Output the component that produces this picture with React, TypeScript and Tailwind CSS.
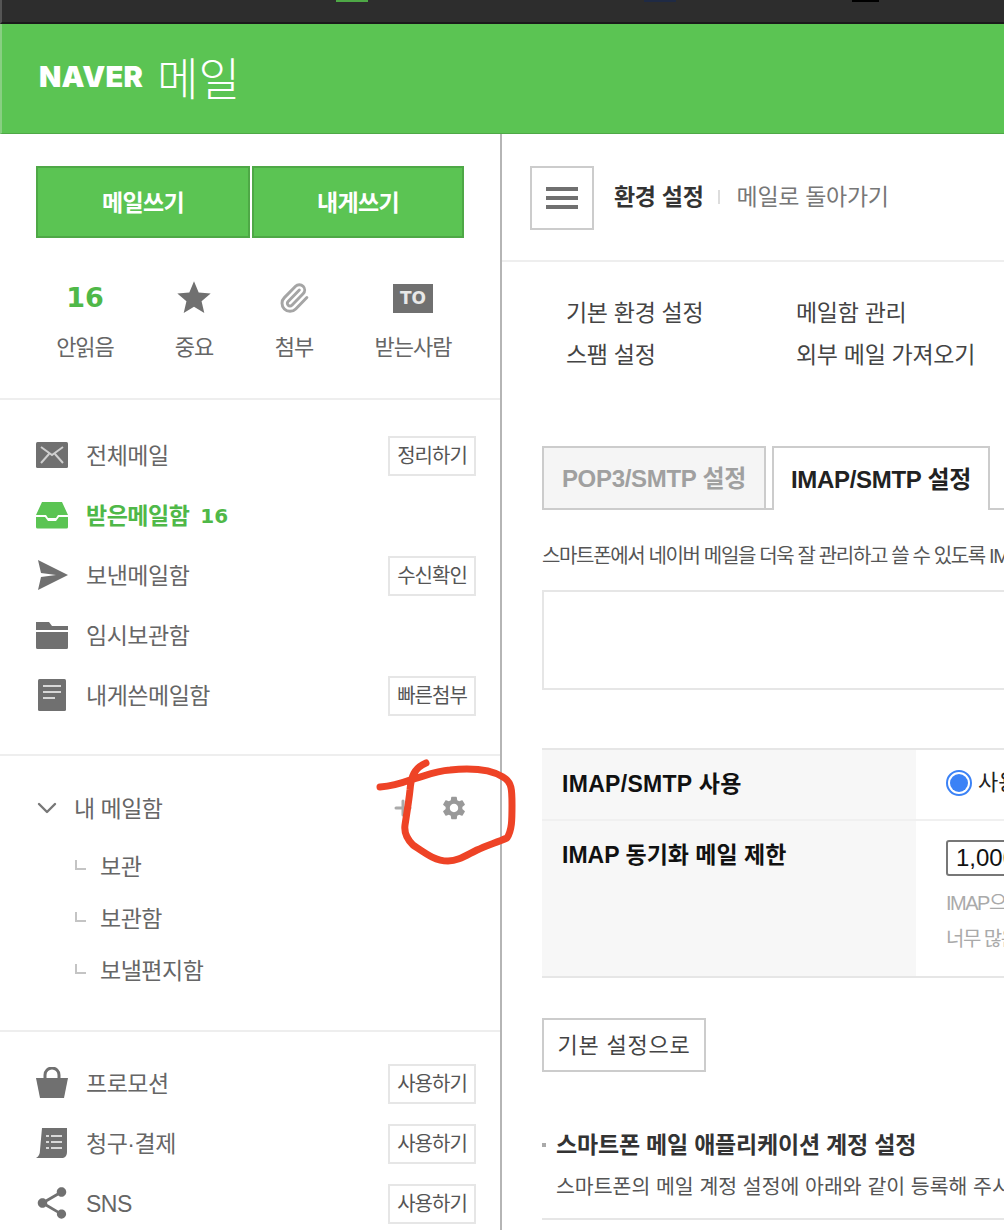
import React from "react";
import { ChevronDown, Paperclip, Plus } from "lucide-react";
import { MdSettings, MdShare, MdStar } from "react-icons/md";

// 사이드바 아이콘
const MailIcon = () => (
  <svg width="32" height="28" viewBox="0 0 32 28" fill="none">
    <rect x="0" y="1" width="32" height="26" rx="1.5" fill="#707070" />
    <path d="M5 6l11 8 11-8M5 22l8-9M27 22l-8-9" stroke="#cfcfcf" strokeWidth="2" />
  </svg>
);

const InboxIcon = () => (
  <svg width="32" height="28" viewBox="0 0 32 28">
    <path d="M6 1h20l6 13H22l-2 3h-8l-2-3H0z" fill="#5bc453" />
    <path d="M0 16h9l3 4h8l3-4h9v10a1.5 1.5 0 0 1-1.500 1.500H1.500A1.500 1.500 0 0 1 0 26z" fill="#5bc453" />
  </svg>
);

const SendIcon = () => (
  <svg width="32" height="32" viewBox="0 0 32 32">
    <path d="M2 1l30 15L2 31l3-13 15-2-15-2z" fill="#707070" />
  </svg>
);

const FolderIcon = () => (
  <svg width="32" height="28" viewBox="0 0 32 28">
    <path d="M0 1h13l3 4h16v4H0z" fill="#707070" />
    <path d="M0 11h32v15.500a1.500 1.500 0 0 1-1.500 1.500H1.500A1.500 1.500 0 0 1 0 26.500z" fill="#707070" />
  </svg>
);

const DocIcon = () => (
  <svg width="32" height="32" viewBox="0 0 32 32">
    <rect x="2" y="0" width="28" height="32" rx="1.500" fill="#707070" />
    <path d="M7 7h18M7 13h18M7 19h12" stroke="#d8d8d8" strokeWidth="2.200" />
  </svg>
);

const BagIcon = () => (
  <svg width="32" height="32" viewBox="0 0 32 32">
    <path d="M0 11h32l-4 20H4z" fill="#707070" />
    <path d="M9 12V8a7 7 0 0 1 14 0v4" fill="none" stroke="#707070" strokeWidth="3" />
  </svg>
);

const BillIcon = () => (
  <svg width="32" height="32" viewBox="0 0 32 32">
    <path d="M6 1h25v24q0 5-4 6H0q4-2 4-8z" fill="#707070" />
    <path d="M10 9h3M15 9h11M10 15h3M15 15h11M10 21h3M15 21h11" stroke="#d8d8d8" strokeWidth="2.200" />
  </svg>
);

const GhostButton = ({ label }: { label: string }) => (
  <span className="flex h-10 w-[88px] items-center justify-center border-2 border-[#e6e6e6] text-[20px] tracking-[-1px] text-[#555]">
    {label}
  </span>
);

const navItems = [
  { icon: <MailIcon />, label: "전체메일", action: "정리하기" },
  { icon: <InboxIcon />, label: "받은메일함", count: "16" },
  { icon: <SendIcon />, label: "보낸메일함", action: "수신확인" },
  { icon: <FolderIcon />, label: "임시보관함" },
  { icon: <DocIcon />, label: "내게쓴메일함", action: "빠른첨부" },
];

const extraItems = [
  { icon: <BagIcon />, label: "프로모션" },
  { icon: <BillIcon />, label: "청구·결제" },
  { icon: <MdShare className="h-[38px] w-[38px] -ml-[3px] text-[#707070]" />, label: "SNS" },
];

const NavRow = ({ icon, label, action, count }: { icon: React.ReactNode; label: string; action?: string; count?: string }) => (
  <div className="flex h-[60px] items-center pr-6">
    <span className="flex w-[50px] shrink-0 items-center">{icon}</span>
    <span className={count ? "mt-0.5 text-[23px] font-bold tracking-[-0.5px] text-[#4fb848]" : "mt-0.5 text-[23px] tracking-[-0.5px] text-[#666]"}>
      {label}
    </span>
    {count && <span className="ml-[11px] mt-0.5 font-['DejaVu_Sans',sans-serif] text-[20px] font-bold text-[#4fb848]">{count}</span>}
    {action && <span className="ml-auto mt-0.5"><GhostButton label={action} /></span>}
  </div>
);

const stats = [
  { top: <span className="font-['DejaVu_Sans',sans-serif] text-[27px] font-bold text-[#4fb848]">16</span>, label: "안읽음", w: "w-[108px]" },
  { top: <MdStar className="h-[40px] w-[40px] text-[#707070]" />, label: "중요", w: "w-[110px]" },
  { top: <Paperclip className="h-[32px] w-[32px] text-[#a5a5a5]" strokeWidth={2.200} />, label: "첨부", w: "w-[90px]" },
  {
    top: (
      <span className="flex h-[29px] w-10 items-center justify-center bg-[#707070] font-['DejaVu_Sans',sans-serif] text-[17px] font-bold leading-none text-[#e8e8e8]">
        TO
      </span>
    ),
    label: "받는사람",
    w: "w-[148px]",
  },
];

const Sidebar = () => (
  <aside className="w-[502px] shrink-0 border-r-2 border-[#b5b5b5]">
    {/* 메일쓰기 버튼, 요약 */}
    <div className="h-[266px] border-b-2 border-[#eeeeee] pt-8">
      <div className="ml-9 flex gap-0.5">
        <button className="h-[72px] w-[214px] border-2 border-[#4ea846] bg-[#5bc453] pt-0.5 text-[23px] font-bold tracking-[-0.6px] text-white">메일쓰기</button>
        <button className="h-[72px] w-[212px] border-2 border-[#4ea846] bg-[#5bc453] pt-0.5 text-[23px] font-bold tracking-[-0.6px] text-white">내게쓰기</button>
      </div>
      <div className="ml-[31px] mt-[38px] flex">
        {stats.map((s) => (
          <div key={s.label} className={`flex flex-col items-center ${s.w}`}>
            <span className="flex h-[44px] items-center">{s.top}</span>
            <span className="mt-[11px] text-[22px] tracking-[-1px] text-[#666]">{s.label}</span>
          </div>
        ))}
      </div>
    </div>

    {/* 메일함 */}
    <div className="h-[356px] border-b-2 border-[#eeeeee] pl-9 pt-[25px]">
      {navItems.map((item) => (
        <NavRow key={item.label} {...item} />
      ))}
    </div>

    {/* 내 메일함 */}
    <div className="h-[276px] border-b-2 border-[#eeeeee] pt-[22px]">
      <div className="flex h-[60px] items-center pl-[31px]">
        <ChevronDown className="h-8 w-8 text-[#777]" strokeWidth={1.800} />
        <span className="ml-[11px] mt-0.5 text-[23px] tracking-[-0.5px] text-[#666]">내 메일함</span>
        <Plus className="ml-[228px] h-[24px] w-[24px] text-[#aaa]" strokeWidth={3} />
        <MdSettings className="ml-[25px] h-[28px] w-[28px] text-[#999]" />
      </div>
      <div className="mt-[3px]">
        {["보관", "보관함", "보낼편지함"].map((name) => (
          <div key={name} className="flex h-[52px] items-center pl-[75px]">
            <span className="mb-1 h-[10px] w-[11px] border-b-2 border-l-2 border-[#c4c4c4]" />
            <span className="ml-[14px] text-[23px] tracking-[-0.5px] text-[#666]">{name}</span>
          </div>
        ))}
      </div>
    </div>

    {/* 부가 서비스 */}
    <div className="pl-9 pt-[21px]">
      {extraItems.map((item) => (
        <NavRow key={item.label} icon={item.icon} label={item.label} action="사용하기" />
      ))}
    </div>
  </aside>
);

const Content = () => (
  <main className="min-w-0 flex-1 overflow-hidden whitespace-nowrap">
    {/* 상단 */}
    <div className="flex h-[128px] items-start border-b-2 border-[#eeeeee] pl-7 pt-8">
      <button className="flex h-16 w-16 flex-col items-center justify-center gap-[5px] border-2 border-[#cccccc]">
        <span className="h-1 w-8 bg-[#707070]" />
        <span className="h-1 w-8 bg-[#707070]" />
        <span className="h-1 w-8 bg-[#707070]" />
      </button>
      <div className="ml-5 flex h-[60px] items-center pt-0.5">
        <span className="text-[23px] font-bold tracking-[-0.3px] text-[#333]">환경 설정</span>
        <span className="ml-[14px] mr-[17px] h-3.5 w-0.5 bg-[#dddddd]" />
        <span className="text-[23px] tracking-[-0.3px] text-[#777]">메일로 돌아가기</span>
      </div>
    </div>

    <div className="pl-10">
      {/* 설정 메뉴 */}
      <div className="ml-6 mt-[30px] grid grid-cols-[230px_1fr] text-[23px] leading-[42px] tracking-[-0.3px] text-[#444]">
        <span>기본 환경 설정</span>
        <span>메일함 관리</span>
        <span>스팸 설정</span>
        <span>외부 메일 가져오기</span>
      </div>

      {/* 탭 */}
      <div className="mt-[70px] flex h-16 items-stretch border-b-2 border-[#cccccc]">
        <div className="flex h-16 w-[224px] items-center justify-center border-2 border-[#cccccc] bg-[#f5f5f5] pt-0.5 text-[24px] font-bold tracking-[-0.3px] text-[#a0a0a0]">
          POP3/SMTP 설정
        </div>
        <div className="ml-1.5 flex h-16 w-[218px] items-center justify-center border-2 border-b-0 border-[#cccccc] bg-white pt-0.5 text-[24px] font-bold tracking-[-0.3px] text-[#222]">
          IMAP/SMTP 설정
        </div>
      </div>

      <p className="mt-[31px] h-[30px] text-[20px] leading-[30px] tracking-[-1.350px] text-[#555]">
        스마트폰에서 네이버 메일을 더욱 잘 관리하고 쓸 수 있도록 IMAP/SMTP 사용을 제공합니다.
      </p>

      <div className="mt-[19px] h-[100px] border-2 border-r-0 border-[#e6e6e6]" />

      {/* 설정 표 */}
      <div className="mt-[58px] border-y-2 border-[#e6e6e6]">
        <div className="flex h-[71px] border-b-2 border-[#f0f0f0]">
          <div className="w-[374px] shrink-0 bg-[#f7f7f7] pl-5 pt-[18px] text-[23px] font-bold leading-[32px] tracking-[0.3px] text-[#111]">IMAP/SMTP 사용</div>
          <div className="flex items-center pl-[30px] pb-1">
            <span className="flex h-[26px] w-[26px] items-center justify-center rounded-full border-2 border-[#3b82f6]">
              <span className="h-[18px] w-[18px] rounded-full bg-[#3b82f6]" />
            </span>
            <span className="ml-1.5 text-[22px] text-[#222]">사용함</span>
          </div>
        </div>
        <div className="flex h-[155px]">
          <div className="w-[374px] shrink-0 bg-[#f7f7f7] pl-5 pt-[18px] text-[23px] font-bold leading-[32px] text-[#111]">IMAP 동기화 메일 제한</div>
          <div className="pl-[30px] pt-[19px]">
            <div className="flex h-9 w-[150px] items-center rounded-[3px] border-2 border-[#777] pl-2 text-[24px] text-[#111]">1,000</div>
            <p className="mt-[9px] text-[20px] leading-[36px] tracking-[-1.500px] text-[#aaa]">
              IMAP으로 동기화할 메일의 개수를 제한합니다.
              <br />
              너무 많은 메일을 동기화하면 느려질 수 있습니다.
            </p>
          </div>
        </div>
      </div>

      <button className="mt-10 flex h-[54px] w-[164px] items-center justify-center border-2 border-[#cccccc] text-[22px] tracking-[0.8px] text-[#444]">
        기본 설정으로
      </button>

      {/* 계정 설정 안내 */}
      <div className="mt-[55px] flex h-9 items-center">
        <span className="h-1 w-1 bg-[#aaa]" />
        <span className="ml-2.5 text-[23px] font-bold tracking-[-0.2px] text-[#333]">스마트폰 메일 애플리케이션 계정 설정</span>
      </div>
      <p className="ml-3.5 mt-[6px] h-[36px] text-[20.500px] leading-[36px] text-[#555]">
        스마트폰의 메일 계정 설정에 아래와 같이 등록해 주시기 바랍니다.
      </p>
      <div className="mt-[13px] h-0.5 bg-[#e6e6e6]" />
    </div>
  </main>
);

export default function App() {
  return (
    <div className="relative flex h-[1230px] w-[1004px] flex-col overflow-hidden bg-white font-['Liberation_Sans','Noto_Sans_CJK_KR',sans-serif]">
      {/* 브라우저 상단 */}
      <div className="relative h-6 shrink-0 border-b-2 border-l-2 border-[#1a1a1a] border-l-[#555555] bg-[#2d2d2d]">
        <span className="absolute left-[334px] top-0 h-0.5 w-8 bg-[#4ea846]" />
        <span className="absolute left-[642px] top-0 h-0.5 w-8 bg-[#1f2a44]" />
        <span className="absolute left-[850px] top-0 h-0.5 w-[27px] bg-black" />
      </div>

      {/* 로고 */}
      <header className="flex h-[110px] shrink-0 items-center border-b border-l-2 border-[#4ea846] border-l-[#88cf82] bg-[#5bc453] pl-[37px] text-white">
        <span className="-mt-1 font-['Inter',sans-serif] text-[29px] font-black tracking-[0.2px]">NAVER</span>
        <span className="ml-[14px] mt-1 text-[45px] font-light leading-none">메일</span>
      </header>

      <div className="flex min-h-0 flex-1">
        <Sidebar />
        <Content />
      </div>

      {/* 손으로 그린 표시 */}
      <svg className="pointer-events-none absolute left-0 top-0" width="1004" height="1230" fill="none">
        <path
          d="M380 787 C392 786 402 783 410 780 C425 776 435 771 450 770 C470 768 490 769 503 777 C512 782 512 790 512 805 C512 820 512 830 507 838 C495 843 485 846 477 850 C465 856 458 861 448 861 C435 861 425 853 413 845 C406 838 404 832 405 825 C407 812 409 800 410 790 C411 777 414 768 426 763"
          stroke="#ee4326"
          strokeWidth="7"
          strokeLinecap="round"
          strokeLinejoin="round"
        />
      </svg>
    </div>
  );
}
